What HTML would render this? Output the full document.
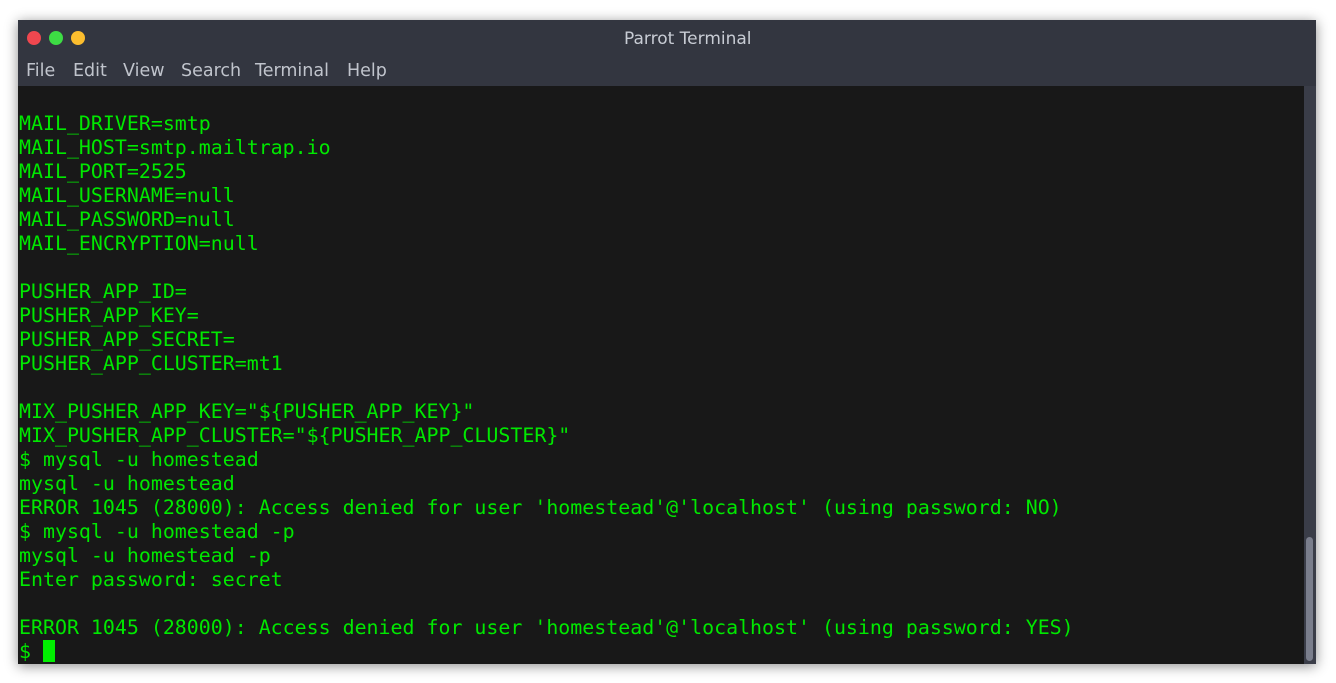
<!DOCTYPE html>
<html><head><style>
body{margin:0;width:1336px;height:683px;background:#fff;position:relative;overflow:hidden;font-family:"DejaVu Sans","Liberation Sans",sans-serif}
.win{position:absolute;left:18px;top:20px;width:1298px;height:644px;background:#333640;box-shadow:0 2px 12px rgba(0,0,0,.45)}
.dot{position:absolute;top:11px;width:14px;height:14px;border-radius:50%}
.title{position:absolute;left:606px;top:9px;color:#c8ccd4;font-size:17px}
.menu span{position:absolute;top:41px;color:#c0c4cc;font-size:17.5px}
.term{position:absolute;left:0;top:66px;width:1286px;height:578px;background:#181818}
pre{margin:0;position:absolute;left:1px;top:26px;font-family:"DejaVu Sans Mono","Liberation Mono",monospace;font-size:19.92px;line-height:24px;color:#00e800}
.sb{position:absolute;left:1286px;top:66px;width:12px;height:578px;background:#3a3d48}
.th{position:absolute;left:2px;top:451px;width:7px;height:124px;border-radius:4px;background:#7a7e8c}
.cur{display:inline-block;width:12px;height:22px;background:#00ee00;vertical-align:-4px}
</style></head><body>
<div class="win">
<div class="dot" style="left:9px;background:#f0474f"></div>
<div class="dot" style="left:31px;background:#3ddc44"></div>
<div class="dot" style="left:53px;background:#fbbd2e"></div>
<div class="title">Parrot Terminal</div>
<div class="menu"><span style="left:8px">File</span><span style="left:55px">Edit</span><span style="left:105px">View</span><span style="left:163px">Search</span><span style="left:237px">Terminal</span><span style="left:329px">Help</span></div>
<div class="term"><pre>MAIL_DRIVER=smtp
MAIL_HOST=smtp.mailtrap.io
MAIL_PORT=2525
MAIL_USERNAME=null
MAIL_PASSWORD=null
MAIL_ENCRYPTION=null

PUSHER_APP_ID=
PUSHER_APP_KEY=
PUSHER_APP_SECRET=
PUSHER_APP_CLUSTER=mt1

MIX_PUSHER_APP_KEY="${PUSHER_APP_KEY}"
MIX_PUSHER_APP_CLUSTER="${PUSHER_APP_CLUSTER}"
$ mysql -u homestead
mysql -u homestead
ERROR 1045 (28000): Access denied for user 'homestead'@'localhost' (using password: NO)
$ mysql -u homestead -p
mysql -u homestead -p
Enter password: secret

ERROR 1045 (28000): Access denied for user 'homestead'@'localhost' (using password: YES)
$ <span class="cur"></span></pre></div>
<div class="sb"><div class="th"></div></div>
</div>
</body></html>
